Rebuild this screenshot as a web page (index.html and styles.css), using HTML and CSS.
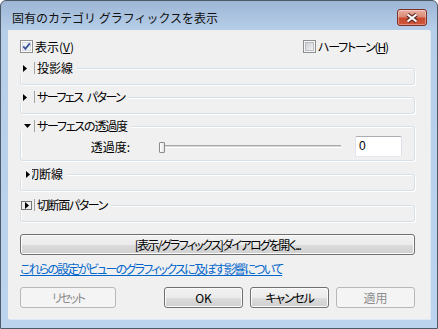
FILE: index.html
```html
<!DOCTYPE html>
<html lang="ja">
<head>
<meta charset="utf-8">
<title>固有のカテゴリ グラフィックスを表示</title>
<link rel="stylesheet" href="styles.css">
</head>
<body>
<div class="window">
  <div class="titlebar">
    <span class="title">固有のカテゴリ グラフィックスを表示</span>
    <button class="close" aria-label="閉じる">
      <svg width="14" height="10" viewBox="0 0 14 10">
        <path d="M2.5 1.5 L11.5 8.5 M11.5 1.5 L2.5 8.5" stroke="#5a2a24" stroke-width="4.2" fill="none"/>
        <path d="M2.5 1.5 L11.5 8.5 M11.5 1.5 L2.5 8.5" stroke="#ffffff" stroke-width="2.2" fill="none"/>
      </svg>
    </button>
  </div>
  <div class="client">
    <div class="toprow">
      <label class="check">
        <svg class="box" width="13" height="13" viewBox="0 0 13 13">
          <rect x="0.5" y="0.5" width="12" height="12" fill="#fdfdfd" stroke="#8e8f8f"/>
          <rect x="2.5" y="2.5" width="8" height="8" fill="#eef2f7" stroke="#d6dbe2"/>
          <path d="M3.2 6.4 L5.4 8.8 L9.8 3.4" stroke="#3a5597" stroke-width="1.8" fill="none"/>
        </svg>
        <span>表示(<u>V</u>)</span>
      </label>
      <label class="check half">
        <svg class="box" width="13" height="13" viewBox="0 0 13 13">
          <defs><linearGradient id="ug" x1="0" y1="0" x2="1" y2="1"><stop offset="0" stop-color="#c9ccd1"/><stop offset="1" stop-color="#f4f4f4"/></linearGradient></defs>
          <rect x="0.5" y="0.5" width="12" height="12" fill="#f6f6f6" stroke="#8e8f8f"/>
          <rect x="2.5" y="2.5" width="8" height="8" fill="url(#ug)" stroke="#b9bcc2"/>
        </svg>
        <span class="ls12">ハーフトーン(<u>H</u>)</span>
      </label>
    </div>

    <div class="group g1">
      <div class="legend">
        <span class="tog"><svg width="4" height="7" viewBox="0 0 4 7"><polygon points="0,0 4,3.5 0,7" fill="#000"/></svg></span>
        <span class="ltext">投影線</span>
      </div>
      <div class="gbody"></div>
    </div>

    <div class="group g2">
      <div class="legend">
        <span class="tog"><svg width="4" height="7" viewBox="0 0 4 7"><polygon points="0,0 4,3.5 0,7" fill="#000"/></svg></span>
        <span class="ltext ls15">サーフェス パターン</span>
      </div>
      <div class="gbody"></div>
    </div>

    <div class="group g3">
      <div class="legend">
        <span class="tog down"><svg width="7" height="4" viewBox="0 0 7 4"><polygon points="0,0 7,0 3.5,4" fill="#000"/></svg></span>
        <span class="ltext ls12">サーフェスの透過度</span>
      </div>
      <div class="trow">
        <span class="tlabel">透過度:</span>
        <div class="slider">
          <div class="track"></div>
          <div class="thumb"></div>
        </div>
        <div class="edit">0</div>
      </div>
    </div>

    <div class="group g4">
      <div class="legend">
        <span class="tog over"><svg width="4" height="7" viewBox="0 0 4 7"><polygon points="0,0 4,3.5 0,7" fill="#000"/></svg></span>
        <span class="ltext under">切断線</span>
      </div>
      <div class="gbody"></div>
    </div>

    <div class="group g5">
      <div class="legend">
        <span class="tog focus"><svg width="11" height="9" viewBox="0 0 11 9"><rect x="0.5" y="0.5" width="10" height="8" fill="none" stroke="#000" stroke-dasharray="1 1"/><polygon points="4,1 8,4.5 4,8" fill="#000"/></svg></span>
        <span class="ltext ls14">切断面パターン</span>
      </div>
      <div class="gbody"></div>
    </div>

    <button class="btn wide"><span class="lsbtn">[表示/グラフィックス]ダイアログを開く...</span></button>

    <a class="link" href="#">これらの設定がビューのグラフィックスに及ぼす影響について</a>

    <div class="bottom">
      <button class="btn reset disabled"><span class="ls20">リセット</span></button>
      <div class="right">
        <button class="btn act">OK</button>
        <button class="btn act"><span class="ls12">キャンセル</span></button>
        <button class="btn act disabled">適用</button>
      </div>
    </div>
  </div>
</div>
</body>
</html>
```

FILE: styles.css
```css
* { box-sizing: border-box; }
html, body { margin: 0; padding: 0; }
body {
  width: 438px;
  height: 329px;
  overflow: hidden;
  background: #ffffff;
  font-family: "Noto Sans CJK JP", "Noto Sans", sans-serif;
  font-size: 12px;
  color: #000;
}
.window {
  width: 438px;
  height: 329px;
  border: 1px solid #4f5a68;
  border-radius: 6px 6px 0 0;
  background: linear-gradient(#9db6d5 0px, #b6cee8 29px, #bcd4ee 100%);
  display: flex;
  flex-direction: column;
}
.titlebar {
  height: 29px;
  display: flex;
  justify-content: space-between;
  align-items: flex-start;
}
.title {
  padding: 9px 0 0 11px;
  line-height: 16px;
  font-size: 12px;
  color: #111;
}
.close {
  margin: 8px 10px 0 0;
  width: 30px;
  height: 17px;
  padding: 0;
  border: 1px solid #7a3128;
  border-radius: 3px;
  background: linear-gradient(#eab0a2 0%, #dc8a76 45%, #c9492f 55%, #d0583c 100%);
  box-shadow: inset 0 0 0 1px rgba(255,255,255,0.35);
  display: flex;
  align-items: center;
  justify-content: center;
}
.client {
  margin: 0 7px;
  height: 289px;
  background: #f0f0f0;
  box-shadow: 1px 1px 0 #dce8f5;
  padding: 10px 15px 0 12px;
  display: flex;
  flex-direction: column;
  font-feature-settings: "palt";
}
.ls12 { letter-spacing: -1.2px; }
.ls14 { letter-spacing: -1.4px; }
.ls15 { letter-spacing: -1.5px; word-spacing: 3px; }
.ls20 { letter-spacing: -2px; }
.lsbtn { letter-spacing: -1.7px; }

.toprow {
  height: 13px;
  display: grid;
  grid-template-columns: 283px auto;
  align-items: center;
}
.check {
  display: flex;
  align-items: center;
  gap: 2px;
  line-height: 13px;
  white-space: nowrap;
}
.check .box { display: block; flex: none; }

.group {
  border: 1px solid #d5dfe5;
  border-radius: 3px;
  box-shadow: inset 1px 1px 0 #ffffff, 1px 1px 0 #ffffff;
}
.g1 { margin-top: 15px; }
.g2 { margin-top: 12px; }
.g3 { margin-top: 12px; }
.g4 { margin-top: 13px; }
.g5 { margin-top: 14px; }
.legend {
  display: flex;
  align-items: center;
  width: max-content;
  height: 12px;
  margin: -7px 0 0 -1px;
  padding-right: 4px;
  background: #f0f0f0;
}
.tog {
  width: 15px;
  height: 12px;
  border-right: 1px solid #a3a3a3;
  display: flex;
  align-items: center;
  padding-left: 3px;
  background: #f0f0f0;
}
.tog svg { display: block; }
.tog.down { padding-left: 4px; }
.tog.over {
  width: 12px;
  border-right: none;
  padding-left: 6px;
  position: relative;
  z-index: 1;
}
.tog.focus { padding-left: 1px; }
.ltext {
  margin-left: 2px;
  line-height: 12px;
  white-space: nowrap;
}
.ltext.under { margin-left: -5px; }
.gbody { height: 10px; }

.trow {
  display: flex;
  align-items: center;
  height: 21px;
  margin: 4px 0 3px 0;
}
.tlabel {
  width: 109px;
  text-align: right;
  line-height: 12px;
}
.slider {
  margin-left: 29px;
  width: 182px;
  height: 21px;
  display: grid;
  align-items: center;
}
.track, .thumb { grid-area: 1 / 1; }
.track {
  height: 3px;
  margin-top: -1px;
  border-top: 1px solid #a9a9a9;
  border-bottom: 1px solid #ffffff;
  background: #d6d6d6;
}
.thumb {
  justify-self: start;
  width: 6px;
  height: 11px;
  margin-top: 1px;
  border: 1px solid #8b8b8b;
  border-radius: 1px;
  background: linear-gradient(90deg, #ffffff, #e4e4e4);
}
.edit {
  margin-left: 14px;
  width: 47px;
  height: 21px;
  background: #ffffff;
  border: 1px solid;
  border-color: #abadb3 #dbdfe6 #e3e9ef #e2e3ea;
  border-radius: 2px;
  padding-left: 3px;
  line-height: 19px;
  font-family: "Liberation Sans", sans-serif;
}

.btn {
  height: 21px;
  padding: 0;
  border: 1px solid #707070;
  border-radius: 3px;
  background: linear-gradient(#f2f2f2 0%, #ebebeb 50%, #dddddd 50%, #cfcfcf 100%);
  box-shadow: inset 0 0 0 1px #fbfbfb;
  font-family: inherit;
  font-size: 12px;
  font-feature-settings: "palt";
  color: #000;
  line-height: 19px;
}
.btn.disabled {
  border-color: #b5b8ba;
  background: #f4f4f4;
  box-shadow: none;
  color: #8d8d8d;
}
.wide {
  margin-top: 12px;
  width: 100%;
}
.link {
  margin-top: 8px;
  line-height: 12px;
  color: #0066cc;
  text-decoration: underline;
  white-space: nowrap;
  width: max-content;
  letter-spacing: -1.75px;
}
.bottom {
  margin-top: 12px;
  display: flex;
  justify-content: space-between;
}
.reset { width: 96px; }
.right { display: flex; gap: 7px; }
.act { width: 79px; }
```
